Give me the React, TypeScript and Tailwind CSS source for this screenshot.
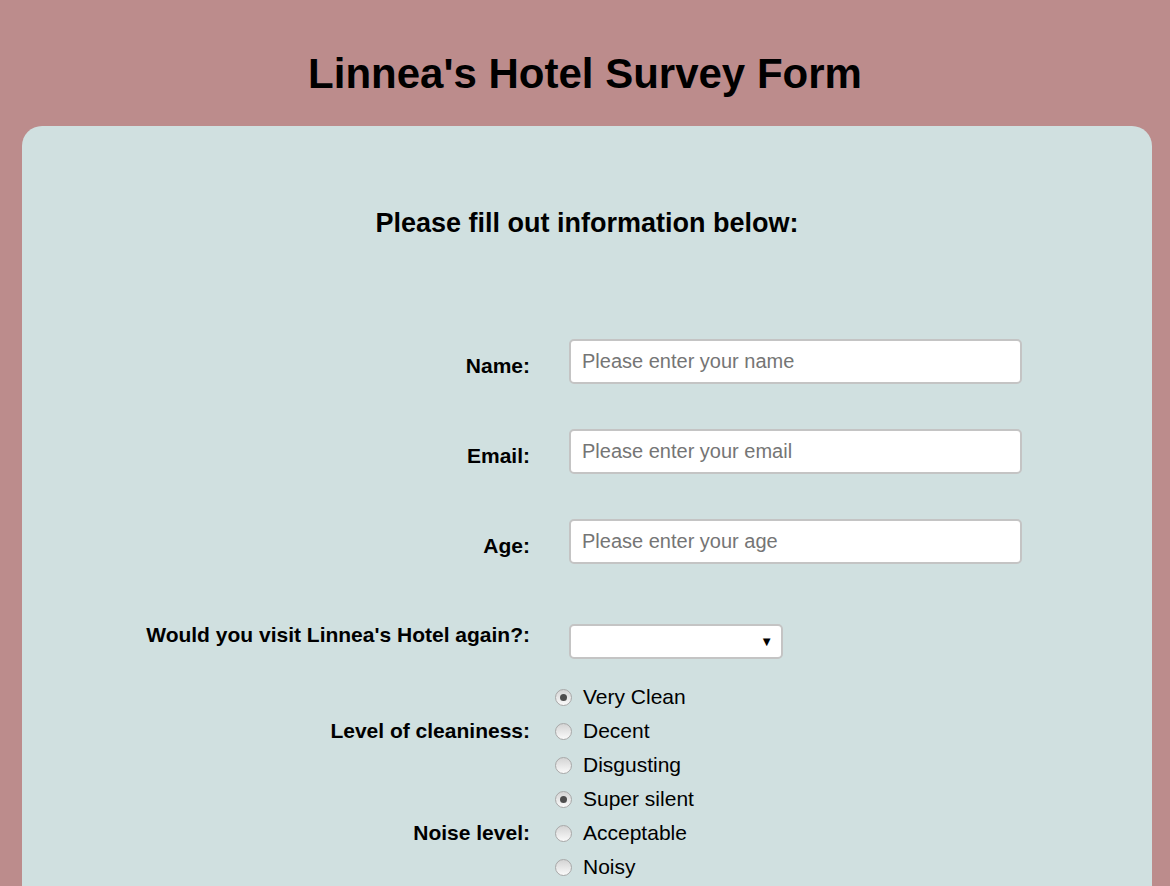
import { useState } from 'react';

const cleanOptions = ['Very Clean', 'Decent', 'Disgusting'];
const noiseOptions = ['Super silent', 'Acceptable', 'Noisy'];

function Radio({ checked, label, onPick }: { checked: boolean; label: string; onPick: () => void }) {
  return (
    <label className="h-[34px] flex items-center cursor-pointer" onClick={onPick}>
      <span className="w-[17px] h-[17px] rounded-full border border-[#a8a8a8] bg-gradient-to-b from-[#d4d4d4] to-[#fafafa] flex items-center justify-center">
        {checked && <span className="w-[7px] h-[7px] rounded-full bg-[#4d4d4d]" />}
      </span>
      <span className="ml-[11px] text-[21px] text-black">{label}</span>
    </label>
  );
}

export default function App() {
  const [clean, setClean] = useState('Very Clean');
  const [noise, setNoise] = useState('Super silent');

  const inputClass =
    'w-[453px] h-[45px] bg-white border-2 border-[#c4c4c4] rounded-[5px] px-[11px] text-[20px] text-black placeholder:text-[#757575] focus:outline-none';

  return (
    <main
      className="min-h-screen bg-[#bc8c8c] pt-[49px] text-black"
      style={{ fontFamily: '"Liberation Sans", Arial, sans-serif' }}
    >
      <h1 className="text-center text-[42px] font-bold leading-[50px] mb-[27px]">
        Linnea's Hotel Survey Form
      </h1>

      <div className="ml-[22px] mr-[18px] bg-[#d0e0e0] rounded-t-[20px] pt-[81px] pb-[20px]">
        <h2 className="text-center text-[27px] font-bold leading-[32px]">
          Please fill out information below:
        </h2>

        <form className="mt-[100px] flex flex-col">
          <div className="flex items-center">
            <label className="w-[508px] text-right text-[21px] font-bold pt-[8px]">Name:</label>
            <input type="text" placeholder="Please enter your name" className={`ml-[39px] ${inputClass}`} />
          </div>

          <div className="flex items-center mt-[45px]">
            <label className="w-[508px] text-right text-[21px] font-bold pt-[8px]">Email:</label>
            <input type="email" placeholder="Please enter your email" className={`ml-[39px] ${inputClass}`} />
          </div>

          <div className="flex items-center mt-[45px]">
            <label className="w-[508px] text-right text-[21px] font-bold pt-[8px]">Age:</label>
            <input type="number" placeholder="Please enter your age" className={`ml-[39px] ${inputClass}`} />
          </div>

          <div className="flex items-start mt-[59px]">
            <label className="w-[508px] text-right text-[21px] font-bold leading-[24px]">
              Would you visit Linnea's Hotel again?:
            </label>
            <div className="ml-[39px] mt-[1px] w-[214px] h-[35px] bg-white border-2 border-[#c4c4c4] rounded-[5px] flex items-center justify-end pr-[8px]">
              <span className="text-[13px] leading-none">▼</span>
            </div>
          </div>

          <div className="flex items-center mt-[21px]">
            <span className="w-[508px] text-right text-[21px] font-bold">Level of cleaniness:</span>
            <div className="ml-[25px] flex flex-col">
              {cleanOptions.map((o) => (
                <Radio key={o} label={o} checked={clean === o} onPick={() => setClean(o)} />
              ))}
            </div>
          </div>

          <div className="flex items-center">
            <span className="w-[508px] text-right text-[21px] font-bold">Noise level:</span>
            <div className="ml-[25px] flex flex-col">
              {noiseOptions.map((o) => (
                <Radio key={o} label={o} checked={noise === o} onPick={() => setNoise(o)} />
              ))}
            </div>
          </div>
        </form>
      </div>
    </main>
  );
}
